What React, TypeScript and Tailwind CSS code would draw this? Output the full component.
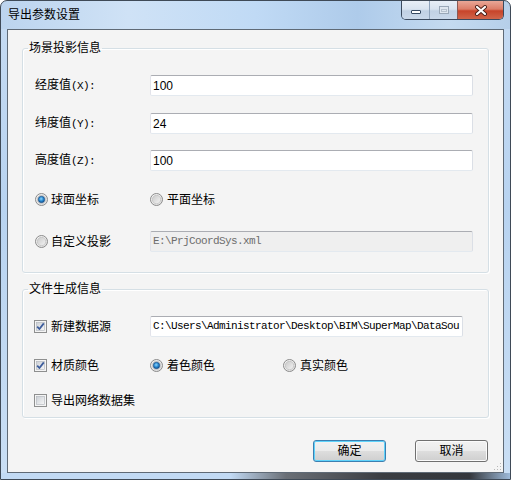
import React from "react";

function Radio({ checked = false }: { checked?: boolean }) {
  return (
    <svg width="13" height="13" viewBox="0 0 13 13" className="shrink-0">
      <defs>
        <linearGradient id="rOuter" x1="0" y1="0" x2="1" y2="1">
          <stop offset="0" stopColor="#f6f6f6" />
          <stop offset="1" stopColor="#dcdcdc" />
        </linearGradient>
        <linearGradient id="rInner" x1="0" y1="0" x2="1" y2="1">
          <stop offset="0" stopColor="#c9c9c9" />
          <stop offset="1" stopColor="#f4f4f4" />
        </linearGradient>
        <radialGradient id="rDot" cx="0.45" cy="0.4" r="0.6">
          <stop offset="0" stopColor="#8fd6fb" />
          <stop offset="0.55" stopColor="#2a8ad2" />
          <stop offset="1" stopColor="#0f4f8e" />
        </radialGradient>
      </defs>
      <circle cx="6.5" cy="6.5" r="6" fill="url(#rOuter)" stroke="#8b8b8b" strokeWidth="1" />
      <circle cx="6.5" cy="6.5" r="4.2" fill="url(#rInner)" stroke="#b9b9b9" strokeWidth="0.6" />
      {checked && <circle cx="6.5" cy="6.5" r="3.2" fill="url(#rDot)" stroke="#1b4f86" strokeWidth="0.6" />}
    </svg>
  );
}

function Checkbox({ checked = false }: { checked?: boolean }) {
  return (
    <svg width="13" height="13" viewBox="0 0 13 13" className="shrink-0">
      <defs>
        <linearGradient id="cInner" x1="0" y1="0" x2="1" y2="1">
          <stop offset="0" stopColor="#cbcfd5" />
          <stop offset="1" stopColor="#f7f7f7" />
        </linearGradient>
      </defs>
      <rect x="0.5" y="0.5" width="12" height="12" fill="#f4f4f4" stroke="#8e8f8f" />
      <rect x="2.5" y="2.5" width="8" height="8" fill="url(#cInner)" stroke="#aeb3b9" strokeWidth="0.6" />
      {checked && (
        <path d="M3.2 6.6 L5.4 9 L9.8 3.4" fill="none" stroke="#3d5d9c" strokeWidth="1.8" strokeLinejoin="round" />
      )}
    </svg>
  );
}

function TextBox({ value, disabled = false, mono = false, className = "" }: { value: string; disabled?: boolean; mono?: boolean; className?: string }) {
  return (
    <div
      className={`h-[21px] flex items-center pl-[2px] overflow-hidden whitespace-nowrap rounded-[2px] border border-t-[#abadb3] border-l-[#e2e3ea] border-r-[#dbdfe6] border-b-[#e3e9ef] ${
        disabled ? "bg-[#efefef] text-[#6d6d6d]" : "bg-white text-black"
      } ${mono ? "font-['Liberation_Mono',monospace] text-[11px] tracking-[-0.6px]" : "text-[12px]"} ${className}`}
    >
      {value}
    </div>
  );
}

// label like 经度值(X): — the half-width part is monospaced in the original
function AxisLabel({ name, axis }: { name: string; axis: string }) {
  return (
    <span className="w-[115px]">
      {name}
      <span className="font-['Liberation_Mono',monospace] text-[11px] tracking-[-0.6px]">({axis}):</span>
    </span>
  );
}

function Group({ title, children, className = "" }: { title: string; children: React.ReactNode; className?: string }) {
  return (
    <fieldset className={`mx-[14px] rounded-[3px] border border-[#d5dfe5] shadow-[inset_1px_1px_0_#fff,1px_1px_0_#fff] px-0 ${className}`}>
      <legend className="ml-[5px] px-[1px] text-[12px] leading-[14px]">{title}</legend>
      {children}
    </fieldset>
  );
}

function DlgButton({ label, focused = false }: { label: string; focused?: boolean }) {
  return (
    <button
      className={`w-[73px] h-[22px] rounded-[3px] border text-[12px] leading-none bg-[linear-gradient(180deg,#f2f2f2_0%,#ebebeb_48%,#dddddd_52%,#cfcfcf_100%)] ${
        focused ? "border-[#3c7fb1] shadow-[inset_0_0_0_1px_#5fd3fb]" : "border-[#707070] shadow-[inset_0_0_0_1px_#fbfbfb]"
      }`}
    >
      {label}
    </button>
  );
}

export default function App() {
  return (
    <div className="w-[511px] h-[480px] flex flex-col rounded-t-[7px] border border-[#3f4a57] overflow-hidden bg-[linear-gradient(90deg,#bcd4ee_0%,#cfe2f6_25%,#c0daf5_50%,#aecbea_70%,#c4daf0_88%,#b6cfe9_100%)] font-['Liberation_Sans','Noto_Sans_CJK_SC',sans-serif] text-black">
      {/* title bar */}
      <div className="h-[28px] flex items-start shrink-0">
        <div className="pl-[7px] pt-[6px] text-[12px] leading-[16px]">导出参数设置</div>
        <div className="ml-auto mr-[6px] flex h-[19px] rounded-b-[5px] border border-t-0 border-[#3b4a5e] overflow-hidden">
          <div className="w-[28px] flex items-center justify-center border-r border-[#8fa3bb] bg-[linear-gradient(180deg,#e8eff7_0%,#d9e4f0_45%,#c1d1e4_55%,#c9d8ea_100%)]">
            <div className="w-[10px] h-[4px] mt-[4px] bg-white border border-[#364a63] rounded-[1px]" />
          </div>
          <div className="w-[28px] flex items-center justify-center border-r border-[#8a5a55] bg-[linear-gradient(180deg,#e8eff7_0%,#d9e4f0_45%,#c1d1e4_55%,#c9d8ea_100%)]">
            <div className="w-[10px] h-[8px] border border-[#9aa8b8] bg-[#dfe7f0] flex items-center justify-center">
              <div className="w-[6px] h-[3px] mt-[1px] border border-[#b7c2ce]" />
            </div>
          </div>
          <div className="w-[45px] flex items-center justify-center bg-[linear-gradient(180deg,#e9a797_0%,#dc7d68_45%,#c7442a_55%,#d0654a_100%)]">
            <svg width="14" height="11" viewBox="0 0 14 11">
              <path d="M3 2 L11 9 M11 2 L3 9" stroke="#4a1f18" strokeWidth="4" strokeLinecap="round" />
              <path d="M3 2 L11 9 M11 2 L3 9" stroke="#ffffff" strokeWidth="2.2" strokeLinecap="round" />
            </svg>
          </div>
        </div>
      </div>

      {/* middle */}
      <div className="flex-1 flex px-[6px] bg-[linear-gradient(180deg,#c4daf2_0%,#b8d3f0_40%,#c9def4_100%)]">
        <div className="relative flex-1 border border-[#5f6a76] bg-[#f4f4f4] flex flex-col">
          <Group title="场景投影信息" className="mt-[11px]">
            <div className="pl-[12px] pr-[15px] pt-[20px] pb-[20px] flex flex-col text-[12px]">
              <div className="h-[21px] flex items-center">
                <AxisLabel name="经度值" axis="X" />
                <TextBox value="100" className="flex-1" />
              </div>
              <div className="h-[21px] mt-[17px] flex items-center">
                <AxisLabel name="纬度值" axis="Y" />
                <TextBox value="24" className="flex-1" />
              </div>
              <div className="h-[21px] mt-[16px] flex items-center">
                <AxisLabel name="高度值" axis="Z" />
                <TextBox value="100" className="flex-1" />
              </div>
              <div className="h-[21px] mt-[18px] flex items-center">
                <div className="w-[115px] flex items-center gap-[3px]">
                  <Radio checked />
                  <span>球面坐标</span>
                </div>
                <div className="flex items-center gap-[4px]">
                  <Radio />
                  <span>平面坐标</span>
                </div>
              </div>
              <div className="h-[21px] mt-[21px] flex items-center">
                <div className="w-[115px] flex items-center gap-[3px]">
                  <Radio />
                  <span>自定义投影</span>
                </div>
                <TextBox value="E:\PrjCoordSys.xml" disabled mono className="flex-1" />
              </div>
            </div>
          </Group>

          <Group title="文件生成信息" className="mt-[9px]">
            <div className="pl-[11px] pr-[15px] pt-[20px] pb-[6px] flex flex-col text-[12px]">
              <div className="h-[21px] flex items-center">
                <div className="w-[116px] flex items-center gap-[4px]">
                  <Checkbox checked />
                  <span>新建数据源</span>
                </div>
                <TextBox value="C:\Users\Administrator\Desktop\BIM\SuperMap\DataSou" mono className="w-[313px]" />
              </div>
              <div className="h-[21px] mt-[18px] flex items-center">
                <div className="w-[116px] flex items-center gap-[4px]">
                  <Checkbox checked />
                  <span>材质颜色</span>
                </div>
                <div className="w-[133px] flex items-center gap-[4px]">
                  <Radio checked />
                  <span>着色颜色</span>
                </div>
                <div className="flex items-center gap-[4px]">
                  <Radio />
                  <span>真实颜色</span>
                </div>
              </div>
              <div className="h-[21px] mt-[14px] flex items-center gap-[4px]">
                <Checkbox />
                <span>导出网络数据集</span>
              </div>
            </div>
          </Group>

          <div className="mt-[22px] flex justify-end gap-[29px] pr-[15px]">
            <DlgButton label="确定" focused />
            <DlgButton label="取消" />
          </div>

          {/* size grip */}
          <svg width="8" height="8" viewBox="0 0 8 8" className="absolute right-[1px] bottom-[1px]">
            <rect x="6" y="0" width="1" height="1" fill="#b8b8b8" />
            <rect x="3" y="3" width="1" height="1" fill="#b8b8b8" />
            <rect x="6" y="3" width="1" height="1" fill="#b8b8b8" />
            <rect x="0" y="6" width="1" height="1" fill="#b8b8b8" />
            <rect x="3" y="6" width="1" height="1" fill="#b8b8b8" />
            <rect x="6" y="6" width="1" height="1" fill="#b8b8b8" />
          </svg>
        </div>
      </div>

      {/* bottom frame */}
      <div className="h-[6px] shrink-0 bg-[linear-gradient(90deg,#c2daf4_0%,#c2daf4_45%,#6a6f76_56%,#3a3d42_75%,#34373c_92%,#9db9d8_100%)]" />
    </div>
  );
}
